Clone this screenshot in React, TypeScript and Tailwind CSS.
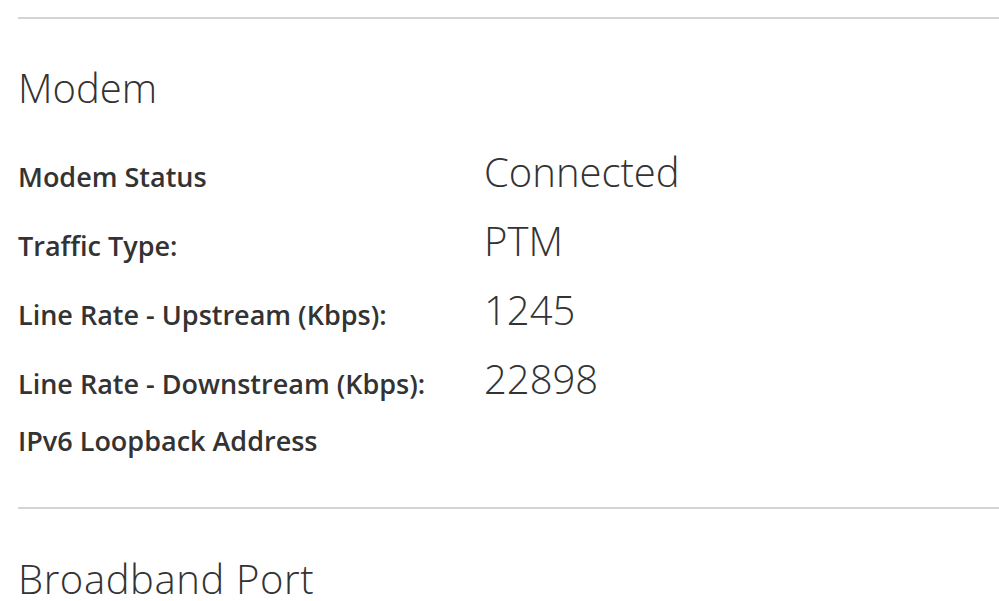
const rows: { label: string; value?: string }[] = [
  { label: 'Modem Status', value: 'Connected' },
  { label: 'Traffic Type:', value: 'PTM' },
  { label: 'Line Rate - Upstream (Kbps):', value: '1245' },
  { label: 'Line Rate - Downstream (Kbps):', value: '22898' },
  { label: 'IPv6 Loopback Address' },
]

export default function App() {
  return (
    <div className="h-[601px] w-full overflow-hidden bg-white pl-[18px] pt-[17px] font-['Open_Sans',sans-serif] text-[#333333]">
      <div className="border-t-2 border-[#d4d4d4]" />

      <h2 className="mt-[45px] text-[40px] font-light leading-[48px]">Modem</h2>

      <div className="mt-[25px]">
        {rows.map((r) => (
          <div key={r.label} className="flex items-baseline py-[12px]">
            <div className="w-[466px] shrink-0 text-[27px] font-semibold leading-[32px]">{r.label}</div>
            {r.value && <div className="text-[40px] font-light leading-[45px]">{r.value}</div>}
          </div>
        ))}
      </div>

      <div className="mt-[38px] border-t-2 border-[#d4d4d4]" />

      <h2 className="mt-[46px] text-[40px] font-light leading-[48px] tracking-[0.6px]">Broadband Port</h2>
    </div>
  )
}
